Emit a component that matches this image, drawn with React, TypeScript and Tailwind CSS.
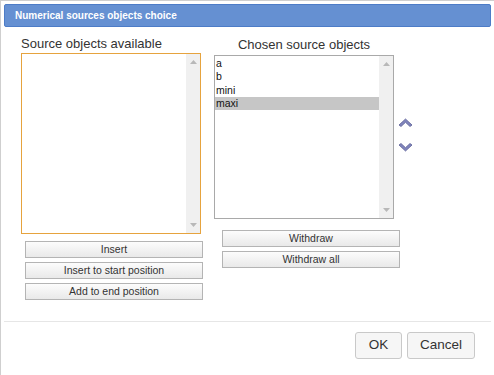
import React from 'react'

const font = { fontFamily: '"Liberation Sans", Arial, sans-serif' }

function ScrollTrack() {
    return (
        <div className="flex w-[14px] flex-col items-center justify-between bg-[#f0f0f0] py-[6px]">
            <svg width="7" height="4" viewBox="0 0 7 4">
                <path d="M0 4 L3.5 0 L7 4 Z" fill="#b8b8b8" />
            </svg>
            <svg width="7" height="4" viewBox="0 0 7 4">
                <path d="M0 0 L3.5 4 L7 0 Z" fill="#b8b8b8" />
            </svg>
        </div>
    )
}

function Btn({ children }: { children: React.ReactNode }) {
    return (
        <button className="h-[17px] w-[178px] border border-[#b4b4b4] bg-gradient-to-b from-[#fcfcfc] to-[#e9e9e9] text-[10.5px] leading-[15px] text-[#333]">
            {children}
        </button>
    )
}

function Chevron({ up }: { up?: boolean }) {
    return (
        <svg width="15" height="9" viewBox="0 0 15 9">
            <path
                d={up ? 'M1 7 L7.5 1 L14 7 L12 8.5 L7.5 4.3 L3 8.5 Z' : 'M1 2 L7.5 8 L14 2 L12 0.5 L7.5 4.7 L3 0.5 Z'}
                fill="#8185bd"
                stroke="#5a5e94"
                strokeWidth="0.8"
                strokeLinejoin="round"
            />
        </svg>
    )
}

export default function App() {
    const items = ['a', 'b', 'mini', 'maxi']
    return (
        <div className="h-[375px] w-[494px] border-l border-t border-[#cfcfcf] bg-white pl-[3px] pt-[3px]" style={font}>
            <div className="flex h-[23px] w-[487px] items-center rounded-[2px] border border-[#4d7cc7] bg-[#6590d2] pl-[10px] text-[10px] font-bold text-white">
                Numerical sources objects choice
            </div>

            <div className="flex h-[294px] pl-[17px] pt-[8px]">
                <div className="flex w-[180px] flex-col">
                    <div className="h-[18px] text-[13px] leading-[18px] text-[#333]">Source objects available</div>
                    <div className="flex h-[181px] w-[180px] border border-[#e6a33e] bg-white">
                        <div className="flex-1" />
                        <ScrollTrack />
                    </div>
                    <div className="ml-[4px] mt-[7px] flex flex-col gap-[4px]">
                        <Btn>Insert</Btn>
                        <Btn>Insert to start position</Btn>
                        <Btn>Add to end position</Btn>
                    </div>
                </div>

                <div className="ml-[13px] flex w-[180px] flex-col">
                    <div className="h-[20px] text-center text-[13px] leading-[20px] text-[#333]">Chosen source objects</div>
                    <div className="flex h-[164px] w-[180px] border border-[#a9a9a9] bg-white">
                        <div className="flex flex-1 flex-col pt-[1px] text-[10.5px] leading-[13.3px] text-[#111]">
                            {items.map((it) => (
                                <div key={it} className={'pl-[1px] ' + (it === 'maxi' ? 'bg-[#c6c6c6]' : '')}>
                                    {it}
                                </div>
                            ))}
                        </div>
                        <ScrollTrack />
                    </div>
                    <div className="ml-[8px] mt-[11px] flex flex-col gap-[4px]">
                        <Btn>Withdraw</Btn>
                        <Btn>Withdraw all</Btn>
                    </div>
                </div>

                <div className="ml-[4px] flex flex-col gap-[16px] pt-[83px]">
                    <Chevron up />
                    <Chevron />
                </div>
            </div>

            <div className="w-[487px] border-t border-[#e6e6e6]" />

            <div className="flex w-[471px] justify-end gap-[5px] pt-[10px]">
                <button className="h-[27px] w-[47px] rounded-[3px] border border-[#c9c9c9] bg-[#f6f6f6] text-[13.5px] text-[#333]">OK</button>
                <button className="h-[27px] w-[68px] rounded-[3px] border border-[#c9c9c9] bg-[#f6f6f6] text-[13.5px] text-[#333]">Cancel</button>
            </div>
        </div>
    )
}
